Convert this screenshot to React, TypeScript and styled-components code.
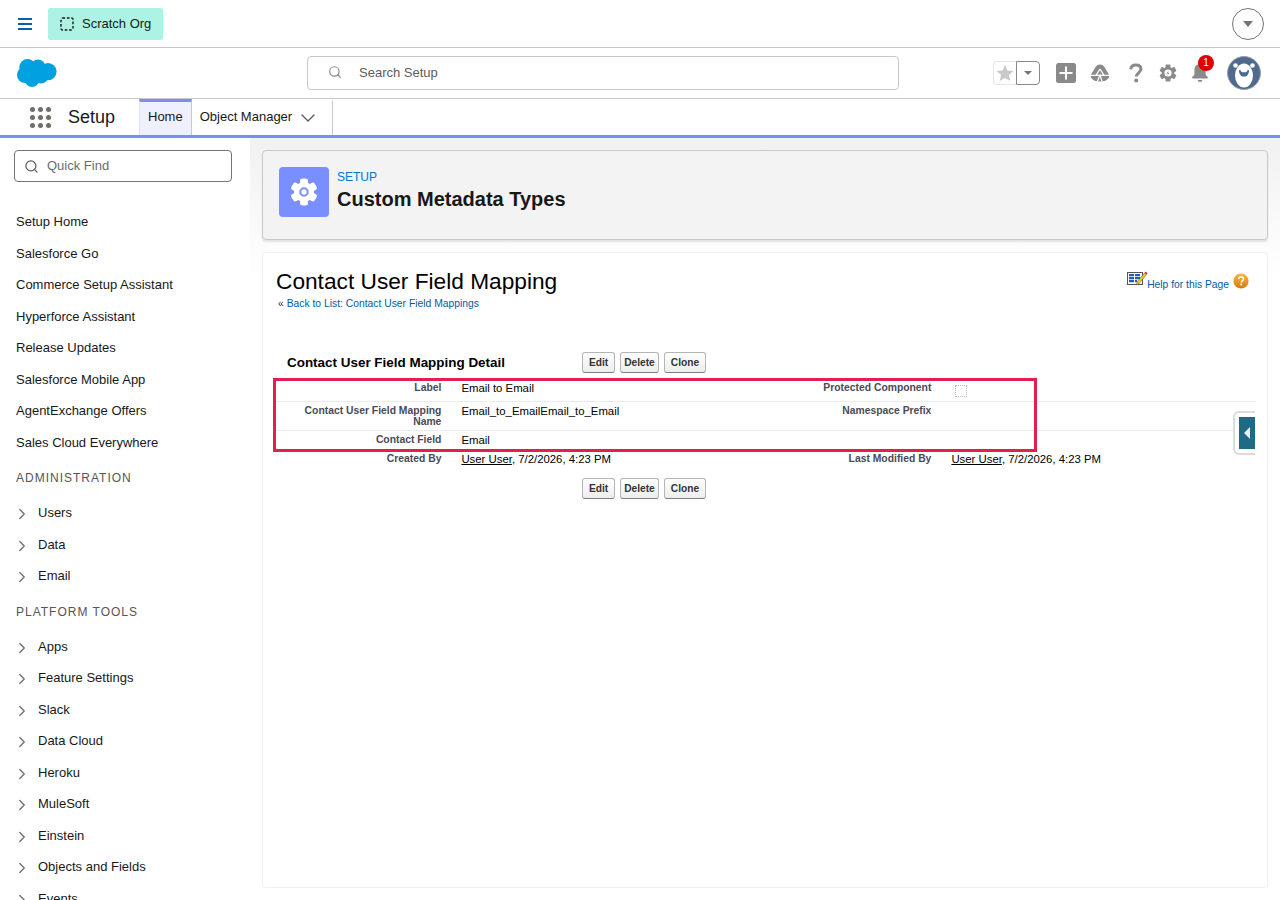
import React from 'react'
import styled, { createGlobalStyle } from 'styled-components'
import { ChevronDown, ChevronRight, Search } from 'lucide-react'

const GlobalStyle = createGlobalStyle`
  html, body {
    margin: 0;
    padding: 0;
    background: #fff;
    font-family: 'Liberation Sans', Arial, sans-serif;
    color: #181818;
  }
  * { box-sizing: border-box; }
`

const Page = styled.div`
  width: 1280px;
  height: 900px;
  overflow: hidden;
  display: flex;
  flex-direction: column;
`

const TopBar = styled.div`
  height: 48px;
  flex: none;
  display: flex;
  align-items: center;
  padding: 0 16px 0 18px;
  border-bottom: 1px solid #c9c9c9;
`

const OrgBadge = styled.div`
  height: 32px;
  width: 115px;
  margin-left: 16px;
  padding-left: 12px;
  display: flex;
  align-items: center;
  gap: 8px;
  background: #acf3e4;
  border-radius: 2px;
  font-size: 13px;
  color: #181818;
`

const RoundMenu = styled.div`
  width: 32px;
  height: 32px;
  margin-left: auto;
  border: 1px solid #747474;
  border-radius: 50%;
  display: flex;
  align-items: center;
  justify-content: center;
`

const Caret = styled.span`
  width: 0;
  height: 0;
  border-left: 5.5px solid transparent;
  border-right: 5.5px solid transparent;
  border-top: 6px solid #747474;
`

const Header = styled.div`
  height: 51px;
  flex: none;
  display: flex;
  align-items: center;
  padding-left: 17px;
  border-bottom: 1px solid #c9c9c9;
`

const SearchBox = styled.div`
  width: 592px;
  height: 34px;
  margin-left: 250px;
  padding: 0 0 2px 20px;
  display: flex;
  align-items: center;
  gap: 17px;
  border: 1px solid #c9c9c9;
  border-radius: 4px;
  font-size: 13px;
  color: #5c5c5c;
`

const Actions = styled.div`
  margin-left: 94px;
  display: flex;
  align-items: center;
`

const Favorites = styled.div`
  width: 47px;
  height: 24px;
  display: flex;
`

const FavStar = styled.div`
  width: 24px;
  display: flex;
  align-items: center;
  justify-content: center;
  border: 1px solid #e5e5e5;
  border-right: 0;
  border-radius: 4px 0 0 4px;
`

const FavMenu = styled.div`
  width: 24px;
  display: flex;
  align-items: center;
  justify-content: center;
  border: 1px solid #8a8a8a;
  border-radius: 0 4px 4px 0;
  & > span {
    border-left-width: 4px;
    border-right-width: 4px;
    border-top-width: 4px;
  }
`

const ActionSlot = styled.div<{ $left: number }>`
  position: relative;
  width: 20px;
  height: 20px;
  margin-left: ${p => p.$left}px;
  display: flex;
  align-items: center;
  justify-content: center;
`

const Badge = styled.span`
  position: absolute;
  top: -8px;
  left: 8px;
  width: 16px;
  height: 16px;
  border-radius: 50%;
  background: #e00000;
  color: #fff;
  font-size: 10px;
  line-height: 16px;
  text-align: center;
`

const Avatar = styled.div`
  width: 34px;
  height: 34px;
  margin-left: 17px;
`

const NavBar = styled.div`
  height: 39px;
  flex: none;
  display: flex;
  align-items: stretch;
  padding-left: 30px;
  border-bottom: 3px solid #7b8cf5;
`

const AppName = styled.div`
  margin-left: 17px;
  width: 71px;
  display: flex;
  align-items: center;
  font-size: 18px;
  color: #181818;
`

const Launcher = styled.div`
  display: flex;
  align-items: center;
`

const NavTab = styled.div<{ $active?: boolean }>`
  display: flex;
  align-items: center;
  gap: 4px;
  padding: 0 ${p => (p.$active ? 8 : 12)}px 4px 8px;
  font-size: 13px;
  border-right: 1px solid #c9c9c9;
  border-top: 3px solid ${p => (p.$active ? '#7b8cf5' : 'transparent')};
  background: ${p => (p.$active ? '#eef1fd' : 'transparent')};
  ${p => (p.$active ? 'border-left: 1px solid #e0e3f5;' : '')}
  svg {
    margin-top: 2px;
  }
`

const Body = styled.div`
  flex: 1;
  min-height: 0;
  display: flex;
`

const Sidebar = styled.div`
  width: 250px;
  flex: none;
  overflow: hidden;
  background: #fff;
  padding: 12px 18px 0 14px;
`

const QuickFind = styled.div`
  height: 32px;
  width: 218px;
  padding: 0 0 2px 9px;
  display: flex;
  align-items: center;
  gap: 8px;
  border: 1px solid #747474;
  border-radius: 4px;
  font-size: 13px;
  color: #6b6b6b;
  margin-bottom: 24px;
  svg {
    margin-top: 2px;
  }
`

const SideList = styled.div`
  margin-left: 2px;
`

const SideItem = styled.div`
  height: 31.5px;
  display: flex;
  align-items: center;
  font-size: 13px;
  color: #181818;
`

const SideBranch = styled(SideItem)`
  gap: 7px;
  svg {
    margin: 3px 0 0 -3px;
    flex: none;
  }
`

const SideHeading = styled.div`
  height: 39px;
  display: flex;
  align-items: center;
  padding-top: 1px;
  font-size: 12px;
  letter-spacing: 1px;
  color: #555;
  text-transform: uppercase;
`

const Main = styled.div`
  flex: 1;
  min-width: 0;
  padding: 12px;
  background: linear-gradient(#f1f1f1, #fff 140px);
`

const PageHeader = styled.div`
  height: 90px;
  padding: 16px;
  display: flex;
  gap: 8px;
  background: #f3f3f3;
  border: 1px solid #c9c9c9;
  border-radius: 4px;
  box-shadow: 0 2px 2px rgba(0, 0, 0, 0.1);
`

const HeaderIcon = styled.div`
  width: 50px;
  height: 50px;
  flex: none;
  background: #7a8fff;
  border-radius: 4px;
  display: flex;
  align-items: center;
  justify-content: center;
`

const Breadcrumb = styled.div`
  margin-top: 3px;
  font-size: 12px;
  color: #0176d3;
`

const PageTitle = styled.div`
  margin-top: 4px;
  font-size: 20px;
  font-weight: bold;
  color: #181818;
`

const Card = styled.div`
  position: relative;
  height: 636px;
  margin-top: 12px;
  background: #fff;
  border: 1px solid #f0f0f0;
  border-radius: 4px;
  padding: 15px 12px 0 12px;
`

const TitleRow = styled.div`
  display: flex;
  justify-content: space-between;
  height: 81px;
`

const RecordTitle = styled.h1`
  margin: 0 0 0 1px;
  font-size: 22.7px;
  font-weight: normal;
  line-height: 26px;
  color: #000;
`

const BackLine = styled.div`
  margin: 4px 0 0 3px;
  font-size: 10.34px;
  color: #333;
`

const Link = styled.a`
  color: #015ba7;
`

const HelpLink = styled.div`
  display: flex;
  align-items: flex-start;
  margin: 2px 6px 0 0;
  font-size: 10.3px;
  gap: 4px;
  a {
    margin: 9px 0 0 -5px;
  }
  svg:last-child {
    margin-top: 3px;
  }
`

const BlockHeader = styled.div`
  display: flex;
  align-items: center;
  height: 26px;
  margin-bottom: 4px;
`

const BlockTitle = styled.h2`
  margin: 0;
  width: 307px;
  padding-left: 12px;
  font-size: 13.44px;
  font-weight: bold;
  color: #000;
`

const ButtonRow = styled.div`
  display: flex;
  gap: 5px;
`

const BottomButtons = styled(ButtonRow)`
  margin: 9px 0 0 307px;
`

const Button = styled.button<{ $width: number }>`
  width: ${p => p.$width}px;
  height: 21px;
  padding: 0;
  font-family: inherit;
  font-size: 10.2px;
  font-weight: bold;
  color: #333;
  background: linear-gradient(#fff, #ededed);
  border: 1px solid #b5b5b5;
  border-bottom-color: #7f7f7f;
  border-radius: 3px;
`

const DetailTable = styled.table`
  width: 980px;
  table-layout: fixed;
  border-collapse: collapse;
`

const Row = styled.tr<{ $line?: boolean }>`
  border-bottom: 1px solid ${p => (p.$line ? '#ececec' : 'transparent')};
`

const LabelCell = styled.td`
  width: 18%;
  padding: 3px 10px 2px 2px;
  text-align: right;
  vertical-align: top;
  font-size: 10.35px;
  line-height: 11.3px;
  font-weight: bold;
  color: #4a4a56;
`

const ValueCell = styled.td`
  width: 32%;
  padding: 3px 10px 2px;
  vertical-align: top;
  font-size: 11.36px;
  line-height: 13px;
  color: #000;
`

const UserLink = styled.a`
  color: #000;
  text-decoration: underline;
`

const EmptyCheck = styled.div`
  width: 12px;
  height: 12px;
  margin: 3px 0 2px 4px;
  border: 1px dotted #b8b8b8;
`

const Highlight = styled.div`
  position: absolute;
  left: 10px;
  top: 125px;
  width: 764px;
  height: 74px;
  border: 3px solid #e0204f;
  pointer-events: none;
`

const SideTab = styled.div`
  position: absolute;
  right: 12px;
  top: 158px;
  width: 22px;
  height: 44px;
  padding: 4px 0 4px 4px;
  background: #fff;
  border: 2px solid #dcdcdc;
  border-right: 0;
  border-radius: 6px 0 0 6px;
`

const SideTabFace = styled.div`
  height: 100%;
  background: #1f6b86;
  display: flex;
  align-items: center;
  justify-content: center;
`

const SideTabArrow = styled.span`
  width: 0;
  height: 0;
  border-top: 6px solid transparent;
  border-bottom: 6px solid transparent;
  border-right: 6px solid #eee;
`

const Hamburger = () => (
  <svg width="14" height="12" viewBox="0 0 14 12">
    <path d="M0 1h14M0 6h14M0 11h14" stroke="#0b5cab" strokeWidth="1.8" />
  </svg>
)

const DashedSquare = () => (
  <svg width="14" height="14" viewBox="0 0 14 14">
    <rect x="1" y="1" width="12" height="12" rx="1.5" fill="none" stroke="#181818" strokeWidth="1.4" strokeDasharray="2.6 1.8" />
  </svg>
)

const Cloud = () => (
  <svg width="40" height="28" viewBox="0 0 40 28">
    <g fill="#00a1e0">
      <circle cx="10.5" cy="8.2" r="8.2" />
      <circle cx="21" cy="7.6" r="7.2" />
      <circle cx="31" cy="12.6" r="8.6" />
      <circle cx="8" cy="16" r="8" />
      <circle cx="15" cy="21" r="7" />
      <circle cx="24" cy="17" r="7.5" />
      <circle cx="17" cy="13" r="6" />
    </g>
  </svg>
)

const Star = () => (
  <svg width="18" height="18" viewBox="0 0 18 18">
    <path d="M9 1l2.4 5.6 6.1.5-4.6 4 1.4 6L9 14l-5.3 3.1 1.4-6-4.6-4 6.1-.5z" fill="#c9c9c9" />
  </svg>
)

const PlusTile = () => (
  <svg width="20" height="20" viewBox="0 0 20 20">
    <rect width="20" height="20" rx="2.5" fill="#8a8a8a" />
    <path d="M10 3.5v13M3.5 10h13" stroke="#fff" strokeWidth="2" />
  </svg>
)

const Trail = () => (
  <svg width="20" height="20" viewBox="0 0 20 20">
    <path d="M10 1.5c2 0 3.6 1 4.8 3L18.6 11c.8 1.4.7 3.2-.3 4.5-2 2.4-5 3-8.3 3s-6.3-.6-8.3-3c-1-1.3-1.1-3.1-.3-4.5l3.8-6.5c1.2-2 2.8-3 4.8-3z" fill="#8a8a8a" />
    <path d="M1 12.3h18M10 6l-4 6.3M10 6l4 6.3M7.5 18l2.5-5.7 2 5.7" fill="none" stroke="#fff" strokeWidth="1.3" />
  </svg>
)

const Question = () => (
  <svg width="16" height="20" viewBox="0 0 16 20">
    <path d="M2.8 6.4C2.9 3.5 5 2.1 7.9 2.1c3 0 5 1.5 5 4 0 3.5-4.5 3.8-4.7 7.4" fill="none" stroke="#8a8a8a" strokeWidth="3" />
    <circle cx="8.2" cy="17.6" r="2" fill="#8a8a8a" />
  </svg>
)

const gearTeeth = [0, 60, 120, 180, 240, 300]

const SetupGear = () => (
  <svg width="30" height="30" viewBox="0 0 24 24">
    {gearTeeth.map(a => (
      <rect key={a} x="8.8" y="1.2" width="6.4" height="8" rx="2" fill="#fff" transform={`rotate(${a} 12 12)`} />
    ))}
    <circle cx="12" cy="12" r="8" fill="#fff" />
    <circle cx="12" cy="12" r="3" fill="none" stroke="#7a8fff" strokeWidth="1.6" />
  </svg>
)

const SmallGear = () => (
  <svg width="18" height="18" viewBox="0 0 24 24">
    {gearTeeth.map(a => (
      <rect key={a} x="8.8" y="0.6" width="6.4" height="7" rx="1" fill="#8a8a8a" transform={`rotate(${a} 12 12)`} />
    ))}
    <circle cx="12" cy="12" r="8.4" fill="#8a8a8a" />
    <circle cx="12" cy="12" r="4.8" fill="#fff" />
    <path d="M12.8 8.5l-2.8 4h2l-1 3.2 3-4.2h-2z" fill="#8a8a8a" />
  </svg>
)

const Bell = () => (
  <svg width="20" height="20" viewBox="0 0 20 20">
    <path d="M10 1c3.6 0 5.6 2.6 5.6 6v4.2c0 1.4 2.4 2.2 2.4 3.4 0 .5-.4.8-.9.8H2.9c-.5 0-.9-.3-.9-.8 0-1.2 2.4-2 2.4-3.4V7c0-3.4 2-6 5.6-6z" fill="#8a8a8a" />
    <path d="M7.6 17h4.8c0 1.2-1.1 2-2.4 2s-2.4-.8-2.4-2z" fill="#8a8a8a" />
  </svg>
)

const Bear = () => (
  <svg width="34" height="34" viewBox="0 0 34 34">
    <circle cx="17" cy="17" r="16.5" fill="#506a8f" stroke="#9aa3b0" strokeWidth="1" />
    <circle cx="8.5" cy="9.5" r="2.3" fill="#fff" />
    <circle cx="25.5" cy="9.5" r="2.3" fill="#fff" />
    <ellipse cx="17" cy="19.5" rx="9" ry="12" fill="#fff" />
    <path d="M12 14.5c1.5-1.2 8.5-1.2 10 0 .6 1-.8 4.2-2.2 5.4-1.3.8-4.3.8-5.6 0-1.4-1.2-2.8-4.4-2.2-5.4z" fill="#506a8f" />
    <ellipse cx="17" cy="14.2" rx="3.4" ry="2" fill="#fff" />
  </svg>
)

const Dots = () => (
  <svg width="21" height="21" viewBox="0 0 21 21" fill="#706e6b">
    {[2.5, 10.5, 18.5].flatMap(y =>
      [2.5, 10.5, 18.5].map(x => <circle key={`${x}-${y}`} cx={x} cy={y} r="2.5" />)
    )}
  </svg>
)

const HelpTable = () => (
  <svg width="21" height="17" viewBox="0 0 21 17">
    <rect x="0.5" y="2.5" width="15" height="12" fill="#fff" stroke="#555" />
    <path d="M2 4h5v2.2H2zM8 4h5v2.2H8zM2 7h5v2.2H2zM8 7h5v2.2H8zM2 10h5v2.2H2zM8 10h2v2.2H8z" fill="#1f5fb4" />
    <path d="M10 12l7.5-9 2 1.6-7.4 9L9.5 15z" fill="#f3c62d" stroke="#5a4a1c" strokeWidth="0.5" />
    <path d="M17.6 2.8l1-1.2 2 1.6-1 1.2z" fill="#c0392b" />
  </svg>
)

const HelpOrb = () => (
  <svg width="16" height="16" viewBox="0 0 16 16">
    <defs>
      <linearGradient id="orb" x1="0" y1="0" x2="0" y2="1">
        <stop offset="0" stopColor="#f8b93c" />
        <stop offset="1" stopColor="#d9790f" />
      </linearGradient>
    </defs>
    <circle cx="8" cy="8" r="7.6" fill="url(#orb)" />
    <path d="M5.6 6.2C5.7 4.8 6.7 4 8 4s2.5.8 2.5 2.1c0 1.7-2.1 1.8-2.3 3.5" fill="none" stroke="#fff" strokeWidth="1.5" />
    <circle cx="8.2" cy="11.6" r="1" fill="#fff" />
  </svg>
)

const topLinks = [
  'Setup Home',
  'Salesforce Go',
  'Commerce Setup Assistant',
  'Hyperforce Assistant',
  'Release Updates',
  'Salesforce Mobile App',
  'AgentExchange Offers',
  'Sales Cloud Everywhere',
]
const adminLinks = ['Users', 'Data', 'Email']
const toolLinks = [
  'Apps',
  'Feature Settings',
  'Slack',
  'Data Cloud',
  'Heroku',
  'MuleSoft',
  'Einstein',
  'Objects and Fields',
  'Events',
]

const Branch = ({ name }: { name: string }) => (
  <SideBranch>
    <ChevronRight size={18} color="#706e6b" strokeWidth={1.7} />
    {name}
  </SideBranch>
)

const Buttons = () => (
  <>
    <Button $width={33}>Edit</Button>
    <Button $width={39}>Delete</Button>
    <Button $width={42}>Clone</Button>
  </>
)

const App: React.FunctionComponent = () => {
  return (
    <Page>
      <GlobalStyle />
      <TopBar>
        <Hamburger />
        <OrgBadge>
          <DashedSquare />
          Scratch Org
        </OrgBadge>
        <RoundMenu>
          <Caret />
        </RoundMenu>
      </TopBar>

      <Header>
        <Cloud />
        <SearchBox>
          <Search size={14} color="#8a8a8a" strokeWidth={2} />
          Search Setup
        </SearchBox>
        <Actions>
          <Favorites>
            <FavStar>
              <Star />
            </FavStar>
            <FavMenu>
              <Caret />
            </FavMenu>
          </Favorites>
          <ActionSlot $left={16}>
            <PlusTile />
          </ActionSlot>
          <ActionSlot $left={14}>
            <Trail />
          </ActionSlot>
          <ActionSlot $left={16}>
            <Question />
          </ActionSlot>
          <ActionSlot $left={12}>
            <SmallGear />
          </ActionSlot>
          <ActionSlot $left={12}>
            <Bell />
            <Badge>1</Badge>
          </ActionSlot>
          <Avatar>
            <Bear />
          </Avatar>
        </Actions>
      </Header>

      <NavBar>
        <Launcher>
          <Dots />
        </Launcher>
        <AppName>Setup</AppName>
        <NavTab $active>Home</NavTab>
        <NavTab>
          Object Manager
          <ChevronDown size={24} color="#5c5c5c" strokeWidth={1.4} />
        </NavTab>
      </NavBar>

      <Body>
        <Sidebar>
          <QuickFind>
            <Search size={15} color="#5c5c5c" strokeWidth={2} />
            Quick Find
          </QuickFind>
          <SideList>
            {topLinks.map(l => (
              <SideItem key={l}>{l}</SideItem>
            ))}
            <SideHeading>Administration</SideHeading>
            {adminLinks.map(l => (
              <Branch key={l} name={l} />
            ))}
            <SideHeading>Platform Tools</SideHeading>
            {toolLinks.map(l => (
              <Branch key={l} name={l} />
            ))}
          </SideList>
        </Sidebar>

        <Main>
          <PageHeader>
            <HeaderIcon>
              <SetupGear />
            </HeaderIcon>
            <div>
              <Breadcrumb>SETUP</Breadcrumb>
              <PageTitle>Custom Metadata Types</PageTitle>
            </div>
          </PageHeader>

          <Card>
            <TitleRow>
              <div>
                <RecordTitle>Contact User Field Mapping</RecordTitle>
                <BackLine>
                  « <Link>Back to List: Contact User Field Mappings</Link>
                </BackLine>
              </div>
              <HelpLink>
                <HelpTable />
                <Link>Help for this Page</Link>
                <HelpOrb />
              </HelpLink>
            </TitleRow>

            <BlockHeader>
              <BlockTitle>Contact User Field Mapping Detail</BlockTitle>
              <ButtonRow>
                <Buttons />
              </ButtonRow>
            </BlockHeader>

            <DetailTable>
              <tbody>
                <Row $line>
                  <LabelCell>Label</LabelCell>
                  <ValueCell>Email to Email</ValueCell>
                  <LabelCell>Protected Component</LabelCell>
                  <ValueCell>
                    <EmptyCheck />
                  </ValueCell>
                </Row>
                <Row $line>
                  <LabelCell>Contact User Field Mapping Name</LabelCell>
                  <ValueCell>Email_to_EmailEmail_to_Email</ValueCell>
                  <LabelCell>Namespace Prefix</LabelCell>
                  <ValueCell />
                </Row>
                <Row>
                  <LabelCell>Contact Field</LabelCell>
                  <ValueCell>Email</ValueCell>
                  <LabelCell />
                  <ValueCell />
                </Row>
                <Row>
                  <LabelCell>Created By</LabelCell>
                  <ValueCell>
                    <UserLink>User User</UserLink>, 7/2/2026, 4:23 PM
                  </ValueCell>
                  <LabelCell>Last Modified By</LabelCell>
                  <ValueCell>
                    <UserLink>User User</UserLink>, 7/2/2026, 4:23 PM
                  </ValueCell>
                </Row>
              </tbody>
            </DetailTable>

            <BottomButtons>
              <Buttons />
            </BottomButtons>

            <Highlight />
            <SideTab>
              <SideTabFace>
                <SideTabArrow />
              </SideTabFace>
            </SideTab>
          </Card>
        </Main>
      </Body>
    </Page>
  )
}

export default App
